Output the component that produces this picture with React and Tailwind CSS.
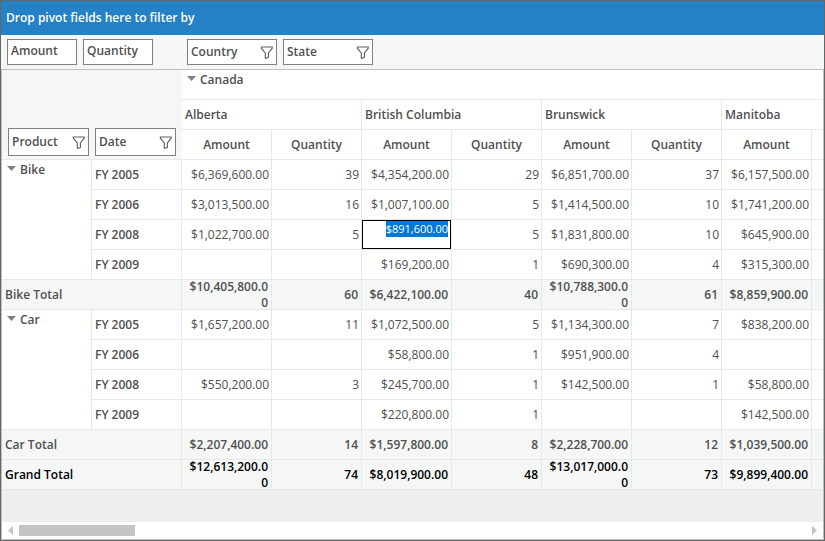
import { useEffect, useRef } from "react";

const states = ["Alberta", "British Columbia", "Brunswick", "Manitoba"];

const groups = [
  {
    name: "Bike",
    rows: [
      ["FY 2005", "$6,369,600.00", "39", "$4,354,200.00", "29", "$6,851,700.00", "37", "$6,157,500.00"],
      ["FY 2006", "$3,013,500.00", "16", "$1,007,100.00", "5", "$1,414,500.00", "10", "$1,741,200.00"],
      ["FY 2008", "$1,022,700.00", "5", "$891,600.00", "5", "$1,831,800.00", "10", "$645,900.00"],
      ["FY 2009", "", "", "$169,200.00", "1", "$690,300.00", "4", "$315,300.00"],
    ],
    total: ["$10,405,800.00", "60", "$6,422,100.00", "40", "$10,788,300.00", "61", "$8,859,900.00"],
  },
  {
    name: "Car",
    rows: [
      ["FY 2005", "$1,657,200.00", "11", "$1,072,500.00", "5", "$1,134,300.00", "7", "$838,200.00"],
      ["FY 2006", "", "", "$58,800.00", "1", "$951,900.00", "4", ""],
      ["FY 2008", "$550,200.00", "3", "$245,700.00", "1", "$142,500.00", "1", "$58,800.00"],
      ["FY 2009", "", "", "$220,800.00", "1", "", "", "$142,500.00"],
    ],
    total: ["$2,207,400.00", "14", "$1,597,800.00", "8", "$2,228,700.00", "12", "$1,039,500.00"],
  },
];

const grandTotal = ["$12,613,200.00", "74", "$8,019,900.00", "48", "$13,017,000.00", "73", "$9,899,400.00"];

const line = "border-r border-b border-[#e8e8e8]";

function Funnel() {
  return (
    <svg width="13" height="13" viewBox="0 0 13 13" fill="none" stroke="#606060" strokeWidth="1.1" aria-hidden="true">
      <path d="M1.3 1h10.9v1.2L8.4 7v4.6L5.3 12.3V7L1.3 2.2z" />
    </svg>
  );
}

function Field({ name, filter, className }) {
  return (
    <button
      type="button"
      className={`flex items-center justify-between border border-[#808080] bg-white px-[3px] text-left font-semibold ${className}`}
    >
      {name}
      {filter && <Funnel />}
    </button>
  );
}

function Expander({ name }) {
  return (
    <button type="button" aria-expanded="true" className="flex items-center gap-1 pt-[2px] pl-[5px] font-semibold">
      <svg width="9" height="5" viewBox="0 0 9 5" className="mb-1" aria-hidden="true">
        <path d="M0 0h9L4.5 5z" fill="#808080" />
      </svg>
      {name}
    </button>
  );
}

function Editor({ value }) {
  const ref = useRef(null);
  useEffect(() => {
    ref.current.focus();
    ref.current.select();
  }, []);
  return (
    <div className="h-[29px] border border-black bg-white pr-[2px]">
      <input
        ref={ref}
        aria-label="Amount, British Columbia, FY 2008"
        defaultValue={value}
        className="block h-4 w-full text-right text-[11px] leading-4 outline-none selection:bg-[#0078d7] selection:text-white"
      />
    </div>
  );
}

function TotalRow({ label, values, className }) {
  return (
    <tr className={`h-[30px] bg-[#f5f7f7] font-semibold ${className}`}>
      <th scope="row" colSpan={2} className={`${line} pl-[3px] text-left font-semibold`}>
        {label}
      </th>
      {values.map((v, i) => (
        <td key={i} className={`${line} pr-[3px] pl-1 text-right break-all`}>
          <div className="flex h-[29px] items-center justify-end">
            <span>{v}</span>
          </div>
        </td>
      ))}
      <td className="border-b border-[#e8e8e8]" />
    </tr>
  );
}

export default function App() {
  return (
    <main className="flex min-h-screen flex-col border border-[#666] bg-[#efefef] font-['Open_Sans','Noto_Sans',sans-serif] text-xs leading-4 text-[#505050]">
      <header className="flex h-[34px] items-center bg-[#2481c5] pl-[5px] font-semibold text-white">
        Drop pivot fields here to filter by
      </header>
      <div className="flex h-[34px] items-center bg-[#f5f7f7]">
        <div className="flex w-[180px] shrink-0 gap-[6px] pl-[6px]">
          <Field name="Amount" className="h-[26px] w-[70px] pb-[2px]" />
          <Field name="Quantity" className="h-[26px] w-[70px] pb-[2px]" />
        </div>
        <div className="flex gap-[6px] pl-[6px]">
          <Field name="Country" filter className="h-[26px] w-[90px]" />
          <Field name="State" filter className="h-[26px] w-[90px]" />
        </div>
      </div>
      <section className="flex grow flex-col border border-[#c0c0c0]">
        <div className="overflow-hidden">
          <table className="w-full table-fixed border-separate border-spacing-0 bg-white">
            <colgroup>
              {Array.from({ length: 9 }, (_, i) => (
                <col key={i} className="w-[90px]" />
              ))}
              <col />
            </colgroup>
            <thead>
              <tr className="h-[30px]">
                <td colSpan={2} rowSpan={3} className="border-b border-[#e8e8e8] bg-[#f5f7f7] pb-[3px] align-bottom">
                  <div className="flex gap-[6px] pl-[6px]">
                    <Field name="Product" filter className="h-7 w-[81px]" />
                    <Field name="Date" filter className="h-7 w-[81px]" />
                  </div>
                </td>
                <th scope="colgroup" colSpan={8} className="border-b border-[#e8e8e8] text-left align-top">
                  <Expander name="Canada" />
                </th>
              </tr>
              <tr className="h-[30px]">
                {states.map((s, i) => (
                  <th
                    key={s}
                    scope="colgroup"
                    colSpan={2}
                    className={`border-b border-[#e8e8e8] pl-[3px] text-left font-semibold ${i < 3 ? "border-r" : ""}`}
                  >
                    {s}
                  </th>
                ))}
              </tr>
              <tr className="h-[30px]">
                {Array.from({ length: 7 }, (_, i) => (
                  <th key={i} scope="col" className={`${line} text-center font-semibold`}>
                    {i % 2 ? "Quantity" : "Amount"}
                  </th>
                ))}
                <td className="border-b border-[#e8e8e8]" />
              </tr>
            </thead>
            {groups.map((g) => (
              <tbody key={g.name}>
                {g.rows.map(([date, ...values], r) => (
                  <tr key={date} className="h-[30px]">
                    {r === 0 && (
                      <th scope="rowgroup" rowSpan={4} className={`${line} text-left align-top`}>
                        <Expander name={g.name} />
                      </th>
                    )}
                    <th scope="row" className={`${line} pl-[3px] text-left font-semibold`}>
                      {date}
                    </th>
                    {values.map((v, i) =>
                      v === "$891,600.00" ? (
                        <td key={i} className={line}>
                          <Editor value={v} />
                        </td>
                      ) : (
                        <td key={i} className={`${line} pr-[2px] text-right`}>
                          {v}
                        </td>
                      ),
                    )}
                    <td className="border-b border-[#e8e8e8]" />
                  </tr>
                ))}
                <TotalRow label={`${g.name} Total`} values={g.total} className="" />
              </tbody>
            ))}
            <tfoot>
              <TotalRow label="Grand Total" values={grandTotal} className="text-black" />
            </tfoot>
          </table>
        </div>
        <div className="mt-auto flex h-[17px] items-center bg-white px-[6px]">
          <button type="button" aria-label="Scroll left">
            <svg width="5" height="9" viewBox="0 0 5 9" aria-hidden="true">
              <path d="M5 0v9L0 4.5z" fill="#c4c4c4" />
            </svg>
          </button>
          <div className="mx-[6px] grow">
            <div className="h-[11px] w-[116px] bg-[#c4c4c4]" />
          </div>
          <button type="button" aria-label="Scroll right">
            <svg width="5" height="9" viewBox="0 0 5 9" aria-hidden="true">
              <path d="M0 0v9l5-4.5z" fill="#c4c4c4" />
            </svg>
          </button>
        </div>
      </section>
    </main>
  );
}
